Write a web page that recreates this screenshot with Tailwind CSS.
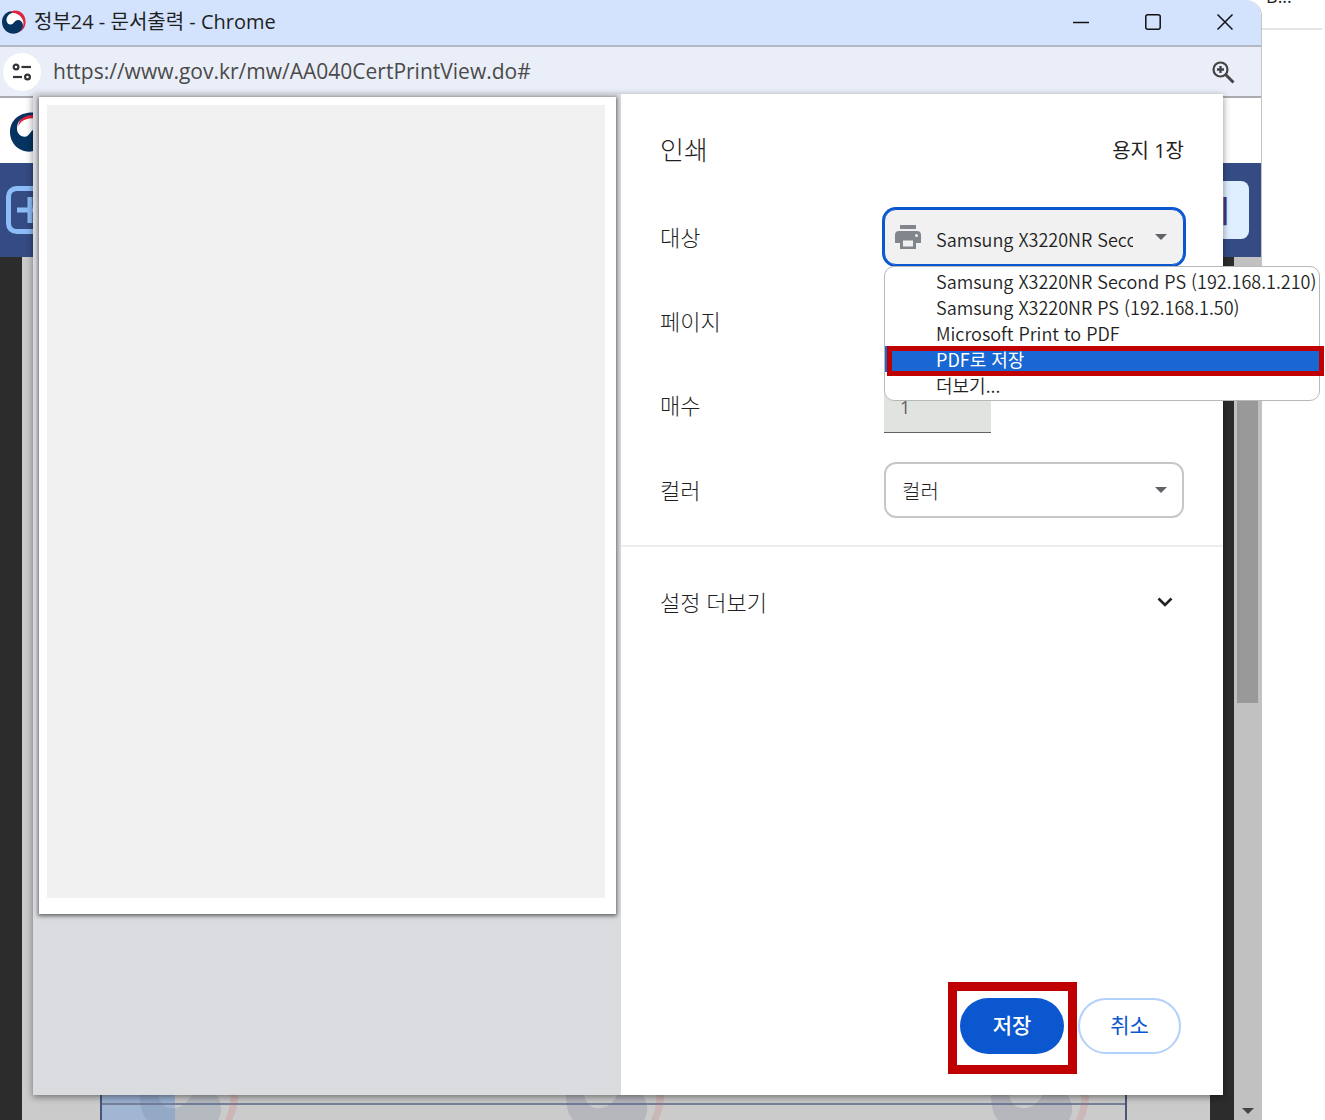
<!DOCTYPE html>
<html lang="ko">
<head>
    <meta charset="UTF-8">
    <meta name="viewport" content="width=device-width, initial-scale=1.0">
    <title>정부24 - 문서출력</title>
    <script src="https://cdn.jsdelivr.net/npm/@tailwindcss/browser@4"></script>
</head>
<body class="h-screen overflow-hidden bg-white font-['Open_Sans','Noto_Sans_CJK_KR',sans-serif] font-light text-[#1f1f1f]">
    <div class="flex h-full">

        <!-- Browser window -->
        <div class="relative flex min-w-0 flex-1 flex-col rounded-tr-2xl border-r border-[#c4c4c4] bg-white">
            <header class="flex h-[47px] shrink-0 items-center rounded-tr-2xl border-b-2 border-[#b4b8c2] bg-[#d3e3fd] pb-px pl-[2px]">
                <svg class="h-6 w-6 shrink-0" viewBox="0 0 24 24">
                    <circle cx="12" cy="12" r="11.500" fill="#fff"/>
                    <path d="M13 .6C20 .8 24 6 23.6 13c-.3 4-2.500 7-5.500 9 2.500-3.500 4.500-8 2.500-12.500C18.500 4.500 12 .8 5.500 3.600 8 1.300 10.500.6 13 .6z" fill="#e0223c"/>
                    <path d="M8.500 1.300C3 2.500 0 7 0 12c0 6.500 5 11.800 11.500 11.800 5.500 0 9.500-4 9.500-8.300 0-3-2.200-5.500-4.800-5.500-4.200 0-4 4.500-7.500 4.500-2.500 0-4.200-2-4.200-4.600 0-3.400 2.500-6.200 6-7.200z" fill="#063360"/>
                </svg>
                <span class="ml-2 text-xl font-normal">정부24 - 문서출력 - Chrome</span>
                <div class="ml-auto flex">
                    <button class="flex h-11 w-[72px] items-center justify-center" aria-label="최소화">
                        <svg class="h-4 w-4" viewBox="0 0 16 16"><path d="M0 8.500h16" stroke="#111" stroke-width="1.500"/></svg>
                    </button>
                    <button class="flex h-11 w-[72px] items-center justify-center" aria-label="최대화">
                        <svg class="h-4 w-4" viewBox="0 0 16 16"><rect x=".8" y=".8" width="14.400" height="14.400" rx="2" fill="none" stroke="#111" stroke-width="1.500"/></svg>
                    </button>
                    <button class="flex h-11 w-[72px] items-center justify-center" aria-label="닫기">
                        <svg class="h-4 w-4" viewBox="0 0 16 16"><path d="M.5.5l15 15M15.500.5l-15 15" stroke="#111" stroke-width="1.500"/></svg>
                    </button>
                </div>
            </header>

            <div class="flex h-[51px] shrink-0 items-center border-b-2 border-[#a9abb1] bg-[#eaeef8] pl-[3px] pr-[26px]">
                <button class="flex h-[38px] w-[38px] items-center justify-center rounded-full bg-white" aria-label="사이트 정보">
                    <svg class="h-5 w-5" viewBox="0 0 20 20" fill="none" stroke="#333" stroke-width="2.200">
                        <circle cx="4" cy="5" r="2.400"/><path d="M9.500 5H19"/>
                        <circle cx="15.500" cy="15" r="2.400"/><path d="M1 15h9"/>
                    </svg>
                </button>
                <span class="ml-3 text-[21px] font-normal text-[#4a4a4a]">https://www.gov.kr/mw/AA040CertPrintView.do#</span>
                <button class="ml-auto" aria-label="확대/축소">
                    <svg class="h-6 w-6" viewBox="0 0 24 24" fill="none" stroke="#444">
                        <circle cx="9.500" cy="9.500" r="7" stroke-width="2.200"/>
                        <path d="M14.500 14.500l8 8" stroke-width="3"/>
                        <path d="M9.500 6v7M6 9.500h7" stroke-width="2.400"/>
                    </svg>
                </button>
            </div>

            <!-- Page under the dialog -->
            <div class="flex h-[65px] shrink-0 items-center bg-white pl-[10px] pt-[2px]">
                <svg class="h-10 w-10" viewBox="0 0 24 24">
                    <path d="M14 .6C20 .8 24 6 23.6 13c-.3 4-2.500 7-5.500 9 2.500-3.500 3.500-8 1.500-12.500C17.500 5.500 13 4 5 9 5 3 10.500.6 14 .6z" fill="#e0223c"/>
                    <path d="M14 3.800C8 3.600 5 7 4.600 10c0 2 2 5 4 5 3 0 3-4 7.400-4.800z" fill="#fff"/>
                    <path d="M14 .3C5 0 0 5.500 0 12c0 6.500 5 11.800 11.500 11.800 5.500 0 9.500-4 9.500-8.300 0-3-2.200-5.500-4.800-5.500-4.200 0-4 4.800-7.500 4.800-2.700 0-4.500-2.200-4.500-4.900C4.200 4.500 9 1.800 14 1.800z" fill="#063360"/>
                </svg>
            </div>
            <div class="flex h-[94px] shrink-0 items-center justify-between bg-[#344b84] pl-[6px] pr-3">
                <svg class="h-12 w-12" viewBox="0 0 48 48" fill="none" stroke="#8dbdf8" stroke-width="5">
                    <rect x="2.500" y="2.500" width="43" height="43" rx="8"/>
                    <path d="M11 24h26M24 11v26"/>
                </svg>
                <button class="h-[58px] rounded-lg bg-[#e0efff] pl-6 pr-[19px] text-[30px] font-medium text-[#443a86]">닫기</button>
            </div>
            <div class="flex min-h-0 flex-1 bg-[#2c2c2c] pl-[22px]">
                <div class="flex flex-1 flex-col justify-end bg-[#cbcbcb] pl-[78px] pr-[83px]">
                    <div class="relative h-[30px] border-x-2 border-[#4b5577]">
                        <div class="h-[15px] border-b-2 border-[#77809a]">
                            <div class="h-full w-[73px] bg-[#9bb2d2]"></div>
                        </div>
                        <div class="h-[15px] w-[73px] bg-[#a1b6d3]"></div>
                        <div class="absolute inset-0 flex justify-between overflow-hidden pl-[38px] pr-[34px]">
                            <svg class="h-[30px] w-[100px]" viewBox="0 0 100 30"><path d="M0 4h18c3 20 26 18 34 0h24c6 9 7 18 2 26H7C2 24 0 16 0 4z" fill="#5f7696" opacity=".2"/><path d="M90 4h8c0 10-2 18-6 26h-7c4-9 6-17 5-26z" fill="#cc6a6a" opacity=".2"/></svg>
                            <svg class="h-[30px] w-[100px]" viewBox="0 0 100 30"><path d="M0 4h18c3 20 26 18 34 0h24c6 9 7 18 2 26H7C2 24 0 16 0 4z" fill="#5f6a86" opacity=".2"/><path d="M90 4h8c0 10-2 18-6 26h-7c4-9 6-17 5-26z" fill="#cc6a6a" opacity=".2"/></svg>
                            <svg class="h-[30px] w-[100px]" viewBox="0 0 100 30"><path d="M0 4h18c3 20 26 18 34 0h24c6 9 7 18 2 26H7C2 24 0 16 0 4z" fill="#5f6a86" opacity=".2"/><path d="M90 4h8c0 10-2 18-6 26h-7c4-9 6-17 5-26z" fill="#cc6a6a" opacity=".2"/></svg>
                        </div>
                    </div>
                </div>
                <!-- Scrollbar -->
                <div class="ml-6 flex w-[27px] flex-col items-center justify-between bg-[#c1c1c1] pb-[6px]">
                    <div class="flex h-[446px] w-[21px] flex-col justify-end">
                        <div class="h-[430px] bg-[#999]"></div>
                    </div>
                    <svg class="h-[6px] w-3" viewBox="0 0 12 6"><path d="M0 0h12L6 6z" fill="#444"/></svg>
                </div>
            </div>

            <!-- Print dialog -->
            <main class="absolute bottom-[25px] left-[33px] right-[38px] top-[94px] flex bg-white shadow-[0_2px_7px_rgba(0,0,0,0.45)]">
                <section class="min-w-0 flex-1 bg-[#dadce0] pl-[6px] pr-[5px] pt-[3px]">
                    <div class="flex aspect-[577/817] bg-white pb-4 pl-2 pr-[11px] pt-2 shadow-[0_1px_4px_1px_rgba(0,0,0,0.55)]">
                        <div class="flex-1 bg-[#f1f1f1]"></div>
                    </div>
                </section>

                <form class="flex w-[602px] shrink-0 flex-col text-[22px]">
                    <div class="flex h-[101px] items-center justify-between px-[39px] pt-3">
                        <h1 class="text-[26px]">인쇄</h1>
                        <span class="text-xl font-normal">용지 1장</span>
                    </div>
                    <div class="border-b-2 border-[#ececec] px-[39px] pb-3">
                        <div class="flex h-[84px] items-center justify-between">
                            <label for="target">대상</label>
                            <div class="relative">
                                <svg class="pointer-events-none absolute left-[10px] top-[14px] h-7 w-7" viewBox="0 0 28 28" fill="#80868b">
                                    <path d="M6 2h16v4H6z"/>
                                    <path d="M5 8h18a4 4 0 0 1 4 4v8h-5v-4H6v4H1v-8a4 4 0 0 1 4-4z"/>
                                    <path fill-rule="evenodd" d="M6 15h16v11H6zM9 17.500v6h10v-6z"/>
                                    <circle cx="22.500" cy="12.500" r="1.500" fill="#f1f1f1"/>
                                </svg>
                                <select id="target" class="h-14 w-[300px] appearance-none rounded-xl border border-[#0b57d0] bg-[#f1f1f1] pl-[51px] pr-[50px] pt-1 font-['Noto_Sans_CJK_KR',sans-serif] text-lg font-[350] ring-2 ring-[#0b57d0]">
                                    <option>Samsung X3220NR Second PS (192.168.1.210)</option>
                                </select>
                                <svg class="pointer-events-none absolute right-[17px] top-[25px] h-[6px] w-3" viewBox="0 0 12 6"><path d="M0 0h12L6 6z" fill="#5f6368"/></svg>

                                <ul role="listbox" class="absolute left-0 top-full z-10 mt-px w-[436px] rounded-[10px] border border-[#b8b8b8] bg-white pb-[2px] pt-px font-['Noto_Sans_CJK_KR',sans-serif] text-lg font-[350] leading-[26px]">
                                    <li role="option" class="whitespace-nowrap pl-[51px]">Samsung X3220NR Second PS (192.168.1.210)</li>
                                    <li role="option" class="pl-[51px]">Samsung X3220NR PS (192.168.1.50)</li>
                                    <li role="option" class="pl-[51px]">Microsoft Print to PDF</li>
                                    <li role="option" aria-selected="true" class="relative bg-[#1967d2] pl-[51px] font-normal text-white">
                                        PDF로 저장
                                        <span class="absolute -bottom-1 -right-[5px] left-[2px] top-0 border-[5px] border-[#c00000]"></span>
                                    </li>
                                    <li role="option" class="pl-[51px]">더보기...</li>
                                </ul>
                            </div>
                        </div>
                        <div class="flex h-[84px] items-center justify-between">
                            <label for="pages">페이지</label>
                            <select id="pages" class="h-14 w-[300px] appearance-none rounded-xl border border-[#c7c7c7] px-4 text-xl"></select>
                        </div>
                        <div class="flex h-[84px] items-center justify-between">
                            <label for="copies">매수</label>
                            <div class="w-[300px]">
                                <input id="copies" type="text" value="1" class="block h-14 w-[107px] border-b border-[#5f6368] bg-[#e1e3e1] px-4 pt-1 text-lg font-normal text-[#5f5f5f]">
                            </div>
                        </div>
                        <div class="flex h-[86px] items-center justify-between">
                            <label for="color">컬러</label>
                            <div class="relative">
                                <select id="color" class="h-14 w-[300px] appearance-none rounded-xl border-2 border-[#c7c7c7] bg-white px-4 pt-1 text-xl">
                                    <option>컬러</option>
                                </select>
                                <svg class="pointer-events-none absolute right-[17px] top-[25px] h-[6px] w-3" viewBox="0 0 12 6"><path d="M0 0h12L6 6z" fill="#5f6368"/></svg>
                            </div>
                        </div>
                    </div>
                    <button type="button" class="flex h-[110px] items-center justify-between pl-[39px] pr-[50px]">
                        설정 더보기
                        <svg class="h-[10px] w-4" viewBox="0 0 16 10"><path d="M1.500 1.500L8 8l6.500-6.500" fill="none" stroke="#222" stroke-width="2.600"/></svg>
                    </button>
                    <div class="mt-auto flex items-center justify-end gap-[14px] pb-[41px] pr-[42px] text-[21px]">
                        <div class="relative">
                            <button type="button" class="h-14 w-[104px] rounded-full bg-[#0b57d0] font-medium text-white">저장</button>
                            <span class="pointer-events-none absolute -bottom-5 -left-3 -right-[13px] -top-4 border-[9px] border-[#c00000]"></span>
                        </div>
                        <button type="button" class="h-14 w-[103px] rounded-full border-2 border-[#b3d1fb] font-normal text-[#0b57d0]">취소</button>
                    </div>
                </form>
            </main>
        </div>

        <!-- Window behind -->
        <aside class="w-[63px] shrink-0 pr-[3px]">
            <div class="flex h-[30px] items-start overflow-hidden border-b-2 border-[#e4e4e4] pl-1">
                <span class="-mt-4 text-lg font-normal leading-6">B...</span>
            </div>
        </aside>
    </div>
</body>
</html>
